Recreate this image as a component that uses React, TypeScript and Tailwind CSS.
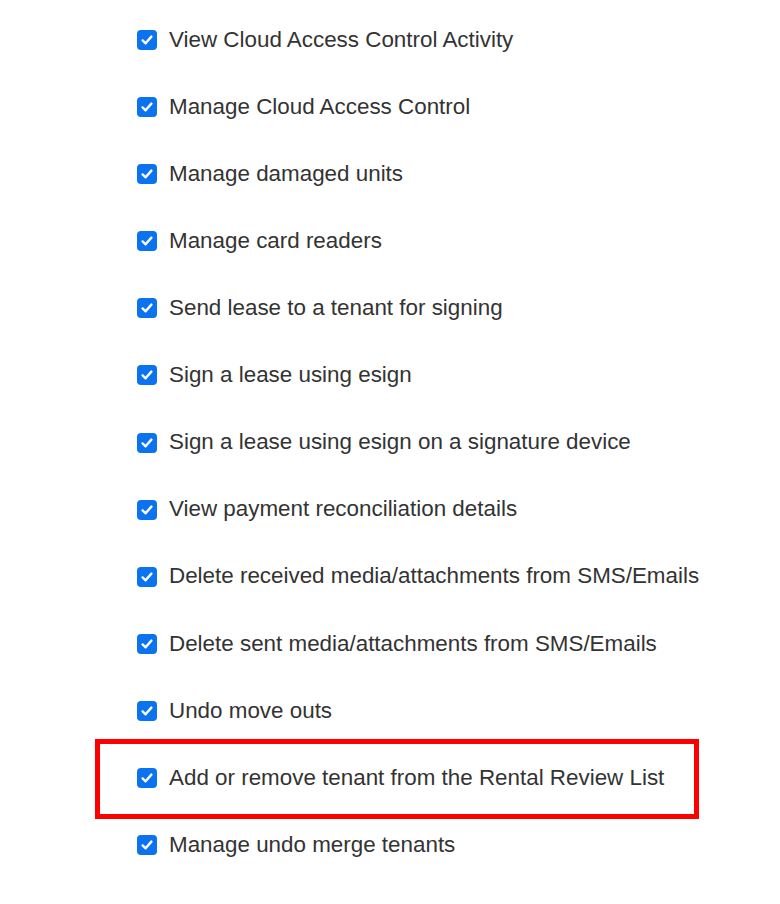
import React from "react"

const items = [
  "View Cloud Access Control Activity",
  "Manage Cloud Access Control",
  "Manage damaged units",
  "Manage card readers",
  "Send lease to a tenant for signing",
  "Sign a lease using esign",
  "Sign a lease using esign on a signature device",
  "View payment reconciliation details",
  "Delete received media/attachments from SMS/Emails",
  "Delete sent media/attachments from SMS/Emails",
  "Undo move outs",
  "Add or remove tenant from the Rental Review List",
  "Manage undo merge tenants",
]

function Check() {
  return (
    <span className="flex h-[20px] w-[20px] shrink-0 items-center justify-center rounded-[4px] bg-[#0b73ef]">
      <svg width="14" height="14" viewBox="0 0 14 14" fill="none">
        <path d="M2.6 7.4 L5.6 10.3 L11.4 3.6" stroke="white" strokeWidth="2.4" strokeLinecap="round" strokeLinejoin="round" />
      </svg>
    </span>
  )
}

export default function App() {
  return (
    <div className="min-h-[904px] w-[780px] bg-white pl-[137px] pt-[6.5px]" style={{ fontFamily: '"Liberation Sans", Arial, sans-serif' }}>
      {items.map((label, i) => (
        <div key={label} className="relative flex h-[67.08px] items-center gap-[12px]">
          {i === 11 && (
            <div className="pointer-events-none absolute left-[-42px] top-[-5.5px] h-[80px] w-[604px] border-[5px] border-[#ff0000]" />
          )}
          <Check />
          <span className="text-[22.4px] leading-none text-[#333333]">{label}</span>
        </div>
      ))}
    </div>
  )
}
